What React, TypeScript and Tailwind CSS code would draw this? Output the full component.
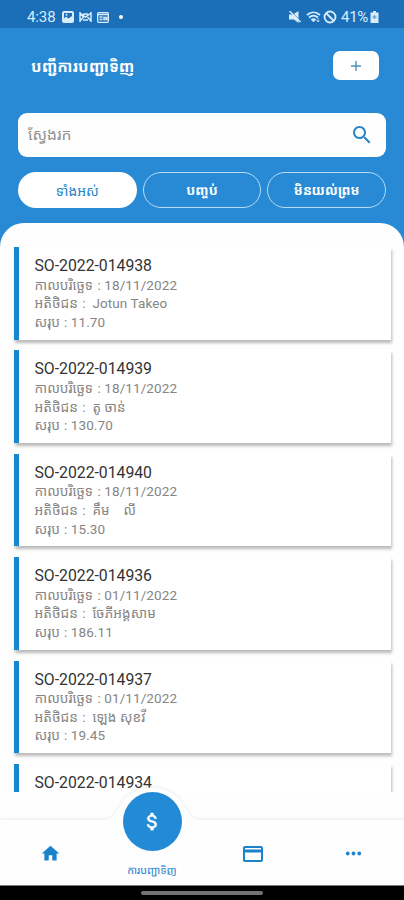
import React from "react";

const KH = "font-['Roboto','Noto_Sans_Khmer','Khmer_OS','Noto_Sans','DejaVu_Sans',sans-serif]";

type Order = { id: string; date?: string; customer?: string; total?: string };

const orders: Order[] = [
  { id: "SO-2022-014938", date: "18/11/2022", customer: "Jotun Takeo", total: "11.70" },
  { id: "SO-2022-014939", date: "18/11/2022", customer: "តូ ចាន់", total: "130.70" },
  { id: "SO-2022-014940", date: "18/11/2022", customer: "គឹម    លី", total: "15.30" },
  { id: "SO-2022-014936", date: "01/11/2022", customer: "ចែភីអង្គសាម", total: "186.11" },
  { id: "SO-2022-014937", date: "01/11/2022", customer: "ឡេង សុខវី", total: "19.45" },
  { id: "SO-2022-014934" },
];

function StatusBar() {
  return (
    <div className="flex h-[28px] shrink-0 items-center bg-[#1b6fb8] pl-[27px] pr-[25px] pt-[6px] text-[#d8ecfb]">
      <span className="w-[30px] whitespace-nowrap text-[15px] leading-none tracking-[-0.1px]">4:38</span>
      <svg className="ml-[5px]" width="12" height="12" viewBox="0 0 12 12">
        <path fill="currentColor" fillRule="evenodd" d="M2 0h8a2 2 0 0 1 2 2v8a2 2 0 0 1-2 2H2a2 2 0 0 1-2-2V2a2 2 0 0 1 2-2ZM2 2v5.500l2-2 2.500 2L10 5V2H2Z" />
        <circle cx="4.500" cy="3.700" r="1" fill="currentColor" />
      </svg>
      <svg className="ml-[5px]" width="13" height="12" viewBox="0 0 13 12" fill="none" stroke="currentColor" strokeWidth="1.500">
        <path d="M1 1v10M12 1v10M1 2l5.500 4L12 2M1 10l3.500-4L1 2M12 10 8.500 6M4 9h5M4 3h5" />
      </svg>
      <svg className="ml-[5px]" width="12" height="11" viewBox="0 0 12 11" fill="none" stroke="currentColor" strokeWidth="1.300">
        <rect x=".65" y=".65" width="10.7" height="9.700" rx="1" />
        <path d="M1 2.500h10M2.500 5h3M2.500 7.500h3M7 5.500h3v2H7z" strokeWidth="1.500" />
      </svg>
      <span className="ml-[10px] h-[4px] w-[4px] rounded-full bg-white" />
      <div className="ml-auto flex items-center">
        <svg width="12" height="12" viewBox="0 0 12 12">
          <path fill="currentColor" d="M0 3.500h4L9.500 0v12L5 8.500H0z" />
          <path d="M1.500 0l10 10" stroke="#1b6fb8" strokeWidth="1" />
          <path d="M0.500 0l11 11" stroke="currentColor" strokeWidth="1.400" />
        </svg>
        <svg className="ml-[5px]" width="15" height="12" viewBox="0 0 15 12" fill="none" stroke="currentColor">
          <path d="M1 4c4-3.500 9-3.500 13 0M3 6.500c3-2.500 6-2.500 9 0" strokeWidth="1.700" />
          <path d="M5 8.500c1.500-1.200 3.500-1.200 5 0L7.500 11z" fill="currentColor" strokeWidth=".5" />
          <path d="M12 7v4m-1.500-1.500L12 11l1.500-1.500" strokeWidth=".8" />
        </svg>
        <svg className="ml-[2px]" width="14" height="14" viewBox="0 0 14 14" fill="none" stroke="currentColor" strokeWidth="1.800">
          <circle cx="7" cy="7" r="5.500" />
          <path d="m3 3 8 8" />
        </svg>
        <span className="ml-[4px] w-[28px] whitespace-nowrap text-[15px] leading-none tracking-[-0.3px]">41%</span>
        <svg className="ml-[1px]" width="9" height="12" viewBox="0 0 9 12">
          <path fill="currentColor" d="M3 0h3v1.500h2.500V12h-8V1.500H3z" />
          <path d="M2.500 6h4M4.500 4v4" stroke="#6da4d1" strokeWidth="1.300" />
        </svg>
      </div>
    </div>
  );
}

function OrderCard({ order }: { order: Order }) {
  const height = order.date ? "h-[92.500px]" : "h-[32px]";
  return (
    <div className={height + " shrink-0 whitespace-pre border-l-[5px] border-[#1787d0] bg-white pl-[15.500px] pt-[10px] text-[#858585] shadow-[1px_3px_3px_rgba(0,0,0,0.27)]"}>
      <div className="h-[18.500px] text-[15.800px] leading-[18.500px] tracking-[-0.02px] text-[#333]">{order.id}</div>
      {order.date && (
        <>
          <Line label="កាលបរិច្ឆេទ" width="w-[59.500px]" value={" : " + order.date} />
          <Line label="អតិថិជន" width="w-[44.200px]" value={" :  " + order.customer} />
          <Line label="សរុប" width="w-[26px]" value={" : " + order.total} />
        </>
      )}
    </div>
  );
}

function Line({ label, width, value }: { label: string; width: string; value: string }) {
  return (
    <div className="flex h-[18.700px] items-center text-[13.500px] leading-[18.700px] tracking-[0.1px]">
      <span className={width + " shrink-0 text-[13.700px] tracking-normal"}>{label}</span>
      <span>{value}</span>
    </div>
  );
}

function Nav() {
  return (
    <nav className="relative h-[65px] shrink-0 bg-[#fefefe]">
      <svg className="absolute left-0 top-[-44px]" width="404" height="64" viewBox="0 0 404 64">
        <path
          d="M0 44H104C112 44 115 38 119 31C132 5 172 5 185 31C189 38 192 44 200 44H404V64H0Z"
          fill="#fefefe"
          style={{ filter: "drop-shadow(0 -1px 1.500px rgba(0,0,0,.07))" }}
        />
      </svg>
      <div className="relative grid h-full grid-cols-4 text-[#1b82cc]">
        <div className="flex justify-center pt-[23px]">
          <svg width="21" height="21" viewBox="0 0 24 24" fill="currentColor"><path d="M10 20v-6h4v6h5v-8h3L12 3 2 12h3v8z" /></svg>
        </div>
        <div className="relative flex justify-center pl-[1px]">
          <div className="absolute top-[-28px] flex h-[59px] w-[59px] items-center justify-center rounded-full bg-[#238ad5] text-white">
            <svg width="23" height="23" viewBox="0 0 24 24" fill="currentColor" stroke="currentColor" strokeWidth=".4"><path d="M11.800 10.900c-2.270-.59-3-1.200-3-2.150 0-1.090 1.010-1.850 2.700-1.850 1.780 0 2.440.85 2.500 2.100h2.210c-.07-1.720-1.120-3.300-3.210-3.810V3h-3v2.160c-1.940.42-3.500 1.680-3.500 3.610 0 2.310 1.910 3.460 4.700 4.130 2.500.6 3 1.480 3 2.410 0 .69-.49 1.790-2.700 1.790-2.060 0-2.870-.92-2.980-2.100h-2.200c.12 2.190 1.760 3.420 3.680 3.830V21h3v-2.150c1.950-.37 3.500-1.500 3.500-3.550 0-2.840-2.430-3.810-4.700-4.400z" /></svg>
          </div>
          <span className="mt-[42px] h-[18px] whitespace-nowrap text-[10.700px] leading-[18px]">ការបញ្ជាទិញ</span>
        </div>
        <div className="flex justify-center pt-[21.500px]">
          <svg width="24" height="24" viewBox="0 0 24 24" fill="currentColor"><path d="M20 4H4c-1.110 0-1.990.89-1.990 2L2 18c0 1.110.89 2 2 2h16c1.110 0 2-.89 2-2V6c0-1.110-.89-2-2-2zm0 14H4v-7.500h16v7.500zm0-10.500H4V6h16v1.500z" /></svg>
        </div>
        <div className="flex justify-center pt-[22px]">
          <svg width="23" height="23" viewBox="0 0 24 24" fill="currentColor"><path d="M6 10c-1.100 0-2 .9-2 2s.9 2 2 2 2-.9 2-2-.9-2-2-2zm12 0c-1.100 0-2 .9-2 2s.9 2 2 2 2-.9 2-2-.9-2-2-2zm-6 0c-1.100 0-2 .9-2 2s.9 2 2 2 2-.9 2-2-.9-2-2-2z" /></svg>
        </div>
      </div>
    </nav>
  );
}

export default function App() {
  return (
    <div className={"flex h-[900px] w-[404px] flex-col overflow-hidden bg-[#288ad4] " + KH}>
      <StatusBar />
      <header className="flex h-[195px] shrink-0 flex-col px-[18px] pt-[23px]">
        <div className="flex h-[29px] items-center justify-between pl-[13px] pr-[7px]">
          <h1 className="mt-[4px] whitespace-nowrap text-[15.600px] font-bold leading-[29px] text-white">បញ្ជីការបញ្ជាទិញ</h1>
          <button className="flex h-[29px] w-[46px] items-center justify-center rounded-[7px] bg-white text-[#4c91b8]">
            <svg width="12" height="12" viewBox="0 0 12 12" stroke="currentColor" strokeWidth="1.400"><path d="M1 6h10M6 1v10" /></svg>
          </button>
        </div>
        <div className="mt-[33px] flex h-[44px] items-center justify-between rounded-[9px] bg-[#fefefe] pl-[10px] pr-[12px]">
          <span className="text-[15.700px] leading-[24px] text-[#929292]">ស្វែងរក</span>
          <svg width="24" height="24" viewBox="0 0 24 24" fill="#2985c6"><path d="M15.500 14h-.79l-.28-.27C15.410 12.590 16 11.110 16 9.500 16 5.910 13.090 3 9.500 3S3 5.910 3 9.500 5.910 16 9.500 16c1.610 0 3.090-.59 4.230-1.570l.27.28v.79l5 4.990L20.490 19l-4.990-5zm-6 0C7.010 14 5 11.990 5 9.500S7.010 5 9.500 5 14 7.010 14 9.500 11.990 14 9.500 14z" /></svg>
        </div>
        <div className="mt-[15px] grid h-[36px] shrink-0 grid-cols-3 gap-[6px] whitespace-nowrap text-[13.300px]">
          <button className="flex items-center justify-center rounded-full bg-white pt-[2px] text-[13.800px] text-[#2985c6]">ទាំងអស់</button>
          <button className="flex items-center justify-center rounded-full border border-[#b8dcf5] pt-[2px] font-bold text-white">បញ្ចប់</button>
          <button className="flex items-center justify-center rounded-full border border-[#b8dcf5] pt-[2px] font-bold text-white">មិនយល់ព្រម</button>
        </div>
      </header>
      <main className="h-[597px] shrink-0 rounded-t-[24px] bg-[#fefefe] pt-[24px]">
        <div className="flex h-[545px] flex-col gap-[10.900px] overflow-hidden pl-[14px] pr-[13px]">
          {orders.map((o) => <OrderCard key={o.id} order={o} />)}
        </div>
      </main>
      <Nav />
      <footer className="flex h-[15px] shrink-0 justify-center border-t border-[#777] bg-black pt-[5px]">
        <div className="h-[4px] w-[122px] rounded-full bg-[#727272]" />
      </footer>
    </div>
  );
}
